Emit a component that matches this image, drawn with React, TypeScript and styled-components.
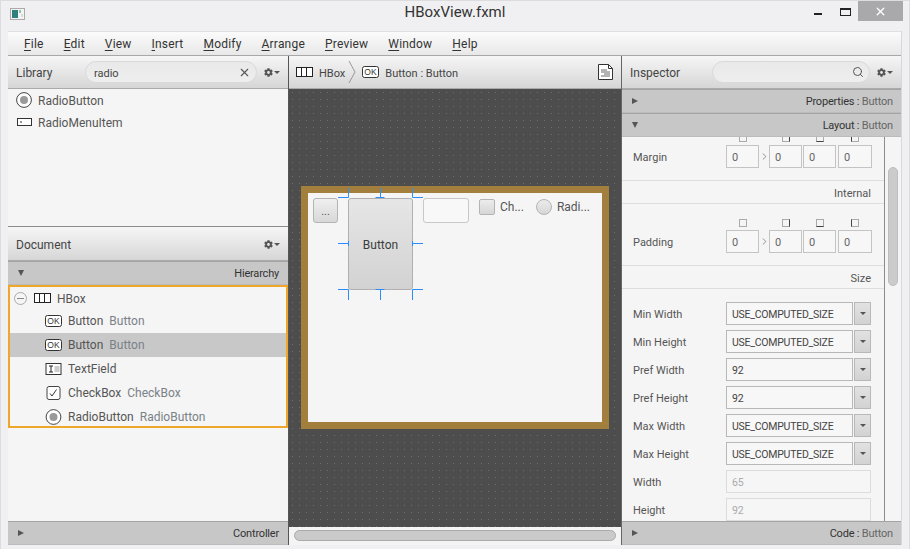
import React from 'react';
import styled, { createGlobalStyle, css } from 'styled-components';
import { FaCog } from 'react-icons/fa';
import { ChevronRight, Search, X } from 'lucide-react';

const MENU = ['File', 'Edit', 'View', 'Insert', 'Modify', 'Arrange', 'Preview', 'Window', 'Help'];

const SIZE_ROWS = [
  { label: 'Min Width', value: 'USE_COMPUTED_SIZE' },
  { label: 'Min Height', value: 'USE_COMPUTED_SIZE' },
  { label: 'Pref Width', value: '92' },
  { label: 'Pref Height', value: '92' },
  { label: 'Max Width', value: 'USE_COMPUTED_SIZE' },
  { label: 'Max Height', value: 'USE_COMPUTED_SIZE' },
];

const HBoxIcon = () => (
  <svg width="17" height="10" viewBox="0 0 17 10" fill="#fff" stroke="#222">
    <rect x="0.5" y="0.5" width="16" height="9" />
    <path d="M5.5 0.5v9M10.5 0.5v9" />
  </svg>
);

const OkIcon = () => (
  <svg width="17" height="12" viewBox="0 0 17 12">
    <rect x="0.5" y="0.5" width="16" height="11" rx="2" fill="#fff" stroke="#333" />
    <text x="8.5" y="9" fontSize="8.5" fontFamily="Liberation Sans, sans-serif" textAnchor="middle" fill="#333">
      OK
    </text>
  </svg>
);

const RadioIcon = ({ size = 16 }: { size?: number }) => (
  <svg width={size} height={size} viewBox="0 0 16 16">
    <circle cx="8" cy="8" r="7.4" fill="#fff" stroke="#444" />
    <circle cx="8" cy="8" r="4" fill="#999" />
  </svg>
);

const MenuItemIcon = () => (
  <svg width="15" height="8" viewBox="0 0 15 8">
    <rect x="0.5" y="0.5" width="14" height="7" fill="#fff" stroke="#333" />
    <rect x="3" y="3" width="2" height="2" fill="#999" />
  </svg>
);

const TextFieldIcon = () => (
  <svg width="16" height="12" viewBox="0 0 16 12">
    <rect x="0.5" y="0.5" width="15" height="11" fill="#fff" stroke="#333" />
    <path d="M3.5 3h4M5.5 3v6M3.5 9h4" stroke="#222" fill="none" />
    <rect x="9" y="3" width="5" height="6" fill="#ccc" />
  </svg>
);

const CheckIcon = () => (
  <svg width="14" height="14" viewBox="0 0 14 14">
    <rect x="0.5" y="0.5" width="13" height="13" rx="2" fill="#fff" stroke="#444" />
    <path d="M3.5 7.5l2 2.5L10 3.5" stroke="#333" fill="none" />
  </svg>
);

const DocIcon = () => (
  <svg width="15" height="16" viewBox="0 0 15 16">
    <path d="M0.5 0.5h10l4 4v11H0.5z" fill="#fff" stroke="#333" />
    <path d="M10.5 0.5v4h4" fill="none" stroke="#333" />
    <path d="M3 6h6M3 8h9M6 10h6M3 12h9" stroke="#666" fill="none" />
  </svg>
);

const AppIcon = () => (
  <svg width="15" height="12" viewBox="0 0 15 12">
    <rect x="0.5" y="0.5" width="14" height="11" fill="#f4f4f4" stroke="#aaa" />
    <rect x="2" y="2" width="6" height="8" fill="#2f7f7f" />
    <rect x="9" y="2" width="2" height="3" fill="#8fc6a8" />
    <rect x="11" y="6" width="2" height="3" fill="#cfe3dc" />
  </svg>
);

const Handles = () => (
  <HandleLayer width="85" height="112" viewBox="0 0 85 112">
    <path
      d="M0 9.5h10.5V0M37.5 9.5h9M42.5 0v9.5M74.5 0v9.5H85M0 55.5h10M10.5 53v5M75 55.5h10M74.5 53v5M0 101.5h10.5V112M37.5 101.5h9M42.5 102v10M85 101.5H74.5V112"
      fill="none"
      stroke="#2b8cff"
    />
  </HandleLayer>
);

const GearMenu = () => (
  <GearBox>
    <FaCog size={9} />
    <Caret />
  </GearBox>
);

const App = () => {
  return (
    <Window>
      <GlobalStyle />
      <TitleBar>
        <AppIcon />
        <TitleText>HBoxView.fxml</TitleText>
        <MinButton />
        <MaxButton />
        <CloseButton>
          <X size={13} strokeWidth={2.5} color="#fff" />
        </CloseButton>
      </TitleBar>

      <Frame>
        <MenuBar>
          {MENU.map((item) => (
            <MenuEntry key={item}>
              <u>{item[0]}</u>
              {item.slice(1)}
            </MenuEntry>
          ))}
        </MenuBar>

        <Panels>
          <SideColumn>
            <PanelHeader>
              <PanelTitle $width={69}>Library</PanelTitle>
              <SearchBox>
                <SearchText>radio</SearchText>
                <X size={13} color="#555" strokeWidth={2} />
              </SearchBox>
              <GearMenu />
            </PanelHeader>
            <LibraryList>
              <LibraryRow>
                <IconSlot>
                  <RadioIcon />
                </IconSlot>
                <LibraryName>RadioButton</LibraryName>
              </LibraryRow>
              <LibraryRow>
                <IconSlot>
                  <MenuItemIcon />
                </IconSlot>
                <LibraryName>RadioMenuItem</LibraryName>
              </LibraryRow>
            </LibraryList>

            <PanelHeader $divided>
              <PanelTitle>Document</PanelTitle>
              <Spacer />
              <GearMenu />
            </PanelHeader>
            <Accordion $open $endPad={9}>
              <Arrow $open />
              <AccordionTitle>Hierarchy</AccordionTitle>
            </Accordion>
            <Tree>
              <TreeRootRow>
                <Collapse />
                <HBoxIcon />
                <RootName>HBox</RootName>
              </TreeRootRow>
              <TreeRow>
                <OkIcon />
                <TreeName>Button</TreeName>
                <TreeType>Button</TreeType>
              </TreeRow>
              <TreeRow $selected>
                <OkIcon />
                <TreeName>Button</TreeName>
                <TreeType>Button</TreeType>
              </TreeRow>
              <TreeRow>
                <TextFieldIcon />
                <TreeName>TextField</TreeName>
              </TreeRow>
              <TreeRow>
                <CheckIcon />
                <TreeName>CheckBox</TreeName>
                <TreeType>CheckBox</TreeType>
              </TreeRow>
              <TreeRow>
                <RadioIcon />
                <TreeName>RadioButton</TreeName>
                <TreeType>RadioButton</TreeType>
              </TreeRow>
            </Tree>
            <Blank />
            <Accordion $endPad={9}>
              <Arrow />
              <AccordionTitle>Controller</AccordionTitle>
            </Accordion>
          </SideColumn>

          <CenterColumn>
            <CrumbBar>
              <HBoxIcon />
              <CrumbText>HBox</CrumbText>
              <CrumbArrow width="8" height="22" viewBox="0 0 8 22">
                <path d="M1 0l6 11-6 11" fill="none" stroke="#999" />
              </CrumbArrow>
              <OkIcon />
              <CrumbText>Button : Button</CrumbText>
              <Spacer />
              <DocIcon />
            </CrumbBar>
            <Canvas>
              <SceneFrame>
                <Scene>
                  <TinyButton>...</TinyButton>
                  <SelectedWrap>
                    <BigButton>Button</BigButton>
                    <Handles />
                  </SelectedWrap>
                  <EmptyField />
                  <CheckGroup>
                    <FakeCheck />
                    Ch...
                  </CheckGroup>
                  <RadioGroup>
                    <FakeRadio />
                    Radi...
                  </RadioGroup>
                </Scene>
              </SceneFrame>
            </Canvas>
            <HScroll>
              <HThumb />
            </HScroll>
          </CenterColumn>

          <InspectorColumn>
            <PanelHeader>
              <PanelTitle $width={82}>Inspector</PanelTitle>
              <SearchBox>
                <Spacer />
                <Search size={12} color="#555" strokeWidth={2} />
              </SearchBox>
              <GearMenu />
            </PanelHeader>
            <Accordion>
              <Arrow />
              <AccordionTitle>
                Properties : <Muted>Button</Muted>
              </AccordionTitle>
            </Accordion>
            <Accordion $open>
              <Arrow $open />
              <AccordionTitle>
                Layout : <Muted>Button</Muted>
              </AccordionTitle>
            </Accordion>
            <ScrollArea>
              <ScrollContent>
                <InsetsSection $first>
                  <PropLabel>Margin</PropLabel>
                  <InsetsGrid>
                    <MiniBox />
                    <MiniBox $side="right" />
                    <MiniBox $side="bottom" />
                    <MiniBox $side="left" />
                    <InsetField>0</InsetField>
                    <InsetField>0</InsetField>
                    <InsetField>0</InsetField>
                    <InsetField>0</InsetField>
                    <InsetLink>
                      <ChevronRight size={11} color="#888" />
                    </InsetLink>
                  </InsetsGrid>
                </InsetsSection>
                <SectionTitle>Internal</SectionTitle>
                <InsetsSection>
                  <PropLabel>Padding</PropLabel>
                  <InsetsGrid>
                    <MiniBox />
                    <MiniBox $side="right" />
                    <MiniBox $side="bottom" />
                    <MiniBox $side="left" />
                    <InsetField>0</InsetField>
                    <InsetField>0</InsetField>
                    <InsetField>0</InsetField>
                    <InsetField>0</InsetField>
                    <InsetLink>
                      <ChevronRight size={11} color="#888" />
                    </InsetLink>
                  </InsetsGrid>
                </InsetsSection>
                <SectionTitle>Size</SectionTitle>
                <SizeList>
                  {SIZE_ROWS.map((row) => (
                    <SizeRow key={row.label}>
                      <PropLabel>{row.label}</PropLabel>
                      <ComboValue>{row.value}</ComboValue>
                      <ComboArrow>
                        <Caret />
                      </ComboArrow>
                    </SizeRow>
                  ))}
                  <SizeRow>
                    <PropLabel>Width</PropLabel>
                    <ReadOnlyValue>65</ReadOnlyValue>
                  </SizeRow>
                  <SizeRow>
                    <PropLabel>Height</PropLabel>
                    <ReadOnlyValue>92</ReadOnlyValue>
                  </SizeRow>
                </SizeList>
              </ScrollContent>
              <VScroll>
                <VThumb />
              </VScroll>
            </ScrollArea>
            <Accordion>
              <Arrow />
              <AccordionTitle>
                Code : <Muted>Button</Muted>
              </AccordionTitle>
            </Accordion>
          </InspectorColumn>
        </Panels>
      </Frame>
    </Window>
  );
};

export default App;

const GlobalStyle = createGlobalStyle`
  html, body {
    margin: 0;
    padding: 0;
    overflow: hidden;
  }
  * {
    box-sizing: border-box;
  }
`;

const Window = styled.div`
  width: 910px;
  height: 549px;
  display: flex;
  flex-direction: column;
  background: #f0f0f2;
  border: 1px solid #dcdcde;
  border-bottom: 0;
  font-family: 'Roboto', 'Open Sans', sans-serif;
  font-size: 11px;
  color: #4a4a4a;
  overflow: hidden;
`;

const TitleBar = styled.div`
  height: 30px;
  flex: none;
  display: flex;
  align-items: flex-start;
  padding: 7px 6px 0 9px;
  position: relative;
`;

const TitleText = styled.div`
  position: absolute;
  left: 0;
  right: 0;
  top: 2px;
  text-align: center;
  font-size: 15px;
  color: #333;
`;

const MinButton = styled.div`
  width: 8px;
  height: 2px;
  margin: 5px 0 0 auto;
  background: #222;
`;

const MaxButton = styled.div`
  width: 11px;
  height: 8px;
  margin: 0 7px 0 18px;
  border: 1px solid #222;
  border-top-width: 2px;
`;

const CloseButton = styled.div`
  width: 45px;
  height: 20px;
  margin-top: -7px;
  background: #a9a9ab;
  display: flex;
  align-items: center;
  justify-content: center;
`;

const Frame = styled.div`
  flex: 1;
  min-height: 0;
  margin: 0 7px 4px 7px;
  display: flex;
  flex-direction: column;
  border-right: 1px solid #d8d8da;
`;

const MenuBar = styled.div`
  height: 25px;
  flex: none;
  display: flex;
  align-items: center;
  padding: 0 0 0 16px;
  gap: 20px;
  font-size: 12px;
  letter-spacing: 0.2px;
  color: #333;
  background: linear-gradient(#fbfbfb, #e8e8e8);
  border-top: 1px solid #e0e0e4;
  border-bottom: 1px solid #a8a8a8;

  u {
    text-decoration-thickness: 1px;
    text-underline-offset: 2px;
  }
`;

const MenuEntry = styled.span``;

const Panels = styled.div`
  flex: 1;
  min-height: 0;
  display: flex;
`;

const SideColumn = styled.div`
  width: 280px;
  flex: none;
  display: flex;
  flex-direction: column;
  background: #f5f5f5;
`;

const CenterColumn = styled.div`
  width: 334px;
  flex: none;
  display: flex;
  flex-direction: column;
  border-left: 1px solid #555;
  border-right: 1px solid #666;
`;

const InspectorColumn = styled(SideColumn)`
  flex: 1;
  width: auto;
  min-width: 0;
`;

const PanelHeader = styled.div<{ $divided?: boolean }>`
  height: 33px;
  flex: none;
  display: flex;
  align-items: center;
  padding: 0 8px;
  background: linear-gradient(#f6f6f6, #d6d6d6);
  border-bottom: 1px solid #aaa;
  ${(p) =>
    p.$divided &&
    css`
      height: 35px;
      padding-top: 1px;
      border-top: 1px solid #8c8c8c;
    `}
`;

const PanelTitle = styled.div<{ $width?: number }>`
  ${(p) => p.$width && `width: ${p.$width}px;`}
  flex: none;
  padding-top: 2px;
  font-size: 12px;
  color: #444;
`;

const Spacer = styled.div`
  flex: 1;
`;

const SearchBox = styled.div`
  flex: 1;
  height: 22px;
  margin-right: 7px;
  padding: 0 5px 0 8px;
  display: flex;
  align-items: center;
  justify-content: space-between;
  border: 1px solid #dadada;
  border-radius: 11px;
  background: linear-gradient(#e9e9e9, #eeeeee);
`;

const SearchText = styled.span`
  padding-top: 2px;
  color: #444;
`;

const GearBox = styled.div`
  display: flex;
  align-items: center;
  gap: 1px;
  color: #555;
`;

const Caret = styled.span`
  width: 0;
  height: 0;
  border-left: 3px solid transparent;
  border-right: 3px solid transparent;
  border-top: 3px solid #555;
`;

const LibraryList = styled.div`
  height: 137px;
  flex: none;
`;

const LibraryRow = styled.div`
  height: 22px;
  display: flex;
  align-items: center;
  gap: 6px;
  padding-left: 8px;
`;

const LibraryName = styled.span`
  padding-top: 2px;
  font-size: 12px;
  color: #555;
`;

const IconSlot = styled.div`
  width: 16px;
  display: flex;
  justify-content: center;
`;

const Accordion = styled.div<{ $open?: boolean; $endPad?: number }>`
  height: 24px;
  flex: none;
  display: flex;
  align-items: center;
  justify-content: space-between;
  padding: 0 ${(p) => p.$endPad ?? 8}px 0 10px;
  background: #c7c7c7;
  border-top: 1px solid #a4a4a4;
  border-bottom: 1px solid #bbb;
`;

const Arrow = styled.span<{ $open?: boolean }>`
  width: 0;
  height: 0;
  ${(p) =>
    p.$open
      ? css`
          border-left: 3.5px solid transparent;
          border-right: 3.5px solid transparent;
          border-top: 6px solid #555;
        `
      : css`
          border-top: 3.5px solid transparent;
          border-bottom: 3.5px solid transparent;
          border-left: 6px solid #555;
        `}
`;

const AccordionTitle = styled.div`
  letter-spacing: -0.2px;
  color: #333;
`;

const Muted = styled.span`
  color: #666;
`;

const Tree = styled.div`
  height: 143px;
  flex: none;
  border: 2px solid #eea62b;
  display: flex;
  flex-direction: column;
`;

const TreeRootRow = styled.div`
  height: 22px;
  flex: none;
  display: flex;
  align-items: center;
  padding-left: 4px;

  svg {
    margin-left: 7px;
  }
`;

const Collapse = styled.div`
  width: 13px;
  height: 13px;
  border: 1px solid #aaa;
  border-radius: 50%;
  background: linear-gradient(90deg, transparent 2px, #888 2px, #888 9px, transparent 9px) center / 100% 1px no-repeat;
`;

const TreeRow = styled.div<{ $selected?: boolean }>`
  height: 24px;
  flex: none;
  display: flex;
  align-items: center;
  padding-left: 35px;
  background: ${(p) => (p.$selected ? '#c8c8c8' : 'transparent')};

  svg {
    width: 17px;
    flex: none;
  }
`;

const TreeName = styled.span`
  margin-left: 6px;
  font-size: 12px;
  color: #555;
`;

const RootName = styled(TreeName)`
  padding-top: 2px;
`;

const TreeType = styled(TreeName)`
  color: #7a8288;
`;

const Blank = styled.div`
  flex: 1;
`;

const CrumbBar = styled.div`
  height: 33px;
  flex: none;
  display: flex;
  align-items: center;
  padding: 0 8px 0 7px;
  background: linear-gradient(#f6f6f6, #d6d6d6);
  border-bottom: 1px solid #aaa;
`;

const CrumbText = styled.span`
  margin-left: 6px;
  padding-top: 2px;
  color: #444;
`;

const CrumbArrow = styled.svg`
  margin: 0 6px 0 3px;
`;

const Canvas = styled.div`
  flex: 1;
  min-height: 0;
  display: flex;
  align-items: flex-start;
  justify-content: center;
  padding-top: 97px;
  background-color: #4d4d4d;
  background-image: radial-gradient(circle, #6f6f68 0.5px, transparent 0.8px);
  background-size: 7px 7px;
`;

const SceneFrame = styled.div`
  width: 308px;
  height: 243px;
  flex: none;
  border: 7px solid #a37f3e;
  background: #f5f5f5;
`;

const Scene = styled.div`
  display: flex;
  align-items: flex-start;
  padding: 5px;
  font-size: 12px;
  color: #555;
`;

const TinyButton = styled.div`
  width: 25px;
  height: 25px;
  border: 1px solid #b4b4b4;
  border-radius: 3px;
  background: linear-gradient(#efefef, #d8d8d8);
  display: flex;
  align-items: flex-end;
  justify-content: center;
  font-size: 11px;
  line-height: 16px;
  padding-bottom: 2px;
`;

const SelectedWrap = styled.div`
  position: relative;
  margin: 0 10px;
`;

const BigButton = styled.div`
  width: 65px;
  height: 92px;
  padding-top: 2px;
  border: 1px solid #b0b0b0;
  border-radius: 3px;
  background: linear-gradient(#e6e6e6, #d2d2d2);
  display: flex;
  align-items: center;
  justify-content: center;
  color: #3c3c3c;
`;

const HandleLayer = styled.svg`
  position: absolute;
  left: -10px;
  top: -10px;
`;

const EmptyField = styled.div`
  width: 46px;
  height: 25px;
  border: 1px solid #c8c8c8;
  border-radius: 3px;
  background: #f8f8f8;
`;

const CheckGroup = styled.div`
  margin-left: 10px;
  display: flex;
  align-items: center;
  gap: 5px;
  height: 18px;
`;

const RadioGroup = styled(CheckGroup)`
  margin-left: 12px;
`;

const FakeCheck = styled.div`
  width: 16px;
  height: 16px;
  border: 1px solid #b4b4b4;
  border-radius: 2px;
  background: linear-gradient(#ececec, #d6d6d6);
`;

const FakeRadio = styled(FakeCheck)`
  border-radius: 50%;
`;

const HScroll = styled.div`
  height: 18px;
  flex: none;
  padding: 3px 5px 4px 5px;
  background: #f4f4f4;
`;

const HThumb = styled.div`
  height: 11px;
  border: 1px solid #aaa;
  border-radius: 6px;
  background: #cacaca;
`;

const ScrollArea = styled.div`
  flex: 1;
  min-height: 0;
  display: flex;
  overflow: hidden;
`;

const ScrollContent = styled.div`
  flex: 1;
  min-width: 0;
  height: 100%;
  overflow: hidden;
  border-right: 1px solid #8c8c8c;
`;

const VScroll = styled.div`
  width: 16px;
  flex: none;
  padding: 30px 3px 0 3px;
`;

const VThumb = styled.div`
  height: 119px;
  border-radius: 6px;
  border: 1px solid #bdbdbd;
  background: #cbcbcb;
`;

const InsetsSection = styled.div<{ $first?: boolean }>`
  height: 62px;
  display: flex;
  align-items: flex-end;
  padding: 0 13px 12px 11px;
  justify-content: space-between;
  border-bottom: 1px solid #dedede;
  ${(p) =>
    p.$first &&
    css`
      margin-top: -18px;
    `}
`;

const PropLabel = styled.div`
  color: #555;
  line-height: 25px;
  height: 23px;
  width: 93px;
  flex: none;
`;

const InsetsGrid = styled.div`
  display: grid;
  grid-template-columns: 33px 10px 33px 1px 33px 2px 34px;
  justify-items: center;
  align-items: center;
  row-gap: 3px;
  width: 146px;

  & > :nth-child(1) { grid-area: 1 / 1; }
  & > :nth-child(2) { grid-area: 1 / 3; }
  & > :nth-child(3) { grid-area: 1 / 5; }
  & > :nth-child(4) { grid-area: 1 / 7; }
  & > :nth-child(5) { grid-area: 2 / 1; }
  & > :nth-child(6) { grid-area: 2 / 3; }
  & > :nth-child(7) { grid-area: 2 / 5; }
  & > :nth-child(8) { grid-area: 2 / 7; }
  & > :nth-child(9) { grid-area: 2 / 2; }
`;

const MiniBox = styled.div<{ $side?: 'right' | 'bottom' | 'left' }>`
  width: 8px;
  height: 8px;
  border: 1px solid #aaa;
  ${(p) => p.$side && `border-${p.$side}-color: #444;`}
`;

const InsetField = styled.div`
  width: 100%;
  height: 23px;
  padding-left: 5px;
  line-height: 23px;
  border: 1px solid #c4c4c4;
  background: #f7f7f7;
  color: #666;
`;

const InsetLink = styled.div`
  display: flex;
`;

const SectionTitle = styled.div`
  height: 23px;
  line-height: 26px;
  padding-right: 13px;
  text-align: right;
  color: #555;
  border-bottom: 1px solid #dedede;
`;

const SizeList = styled.div`
  display: flex;
  flex-direction: column;
  gap: 5px;
  padding: 13px 13px 0 11px;
`;

const SizeRow = styled.div`
  height: 23px;
  display: flex;
  flex: none;
`;

const ComboValue = styled.div`
  flex: 1;
  min-width: 0;
  padding-left: 5px;
  line-height: 23px;
  border: 1px solid #b8b8b8;
  background: #f7f7f7;
  font-size: 10.5px;
  letter-spacing: -0.25px;
  color: #444;
`;

const ComboArrow = styled.div`
  width: 17px;
  flex: none;
  margin-left: 1px;
  border: 1px solid #b8b8b8;
  background: linear-gradient(#e2e2e2, #d2d2d2);
  display: flex;
  align-items: center;
  justify-content: center;
`;

const ReadOnlyValue = styled(ComboValue)`
  border-color: #dcdcdc;
  color: #aaa;
  background: #f6f6f6;
`;
